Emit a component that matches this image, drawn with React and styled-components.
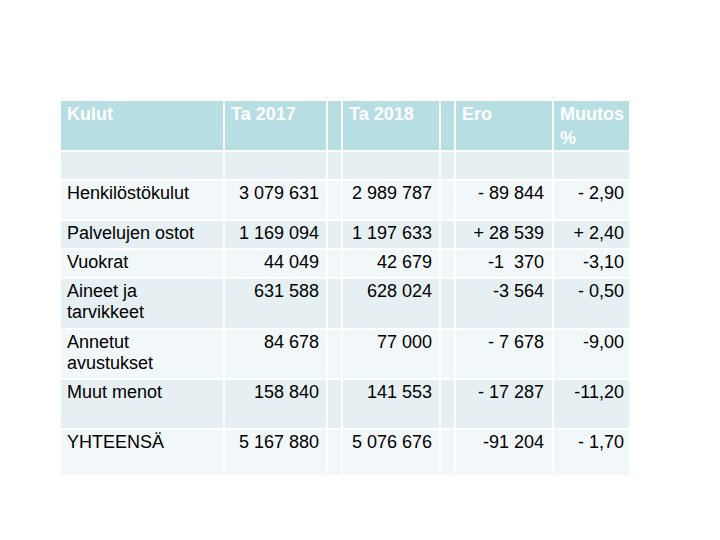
import styled, { createGlobalStyle } from 'styled-components';

const GlobalStyle = createGlobalStyle`
  * {
    box-sizing: border-box;
  }
  body {
    margin: 0;
    background: #ffffff;
    font-family: 'Liberation Sans', Arial, sans-serif;
  }
`;

const Page = styled.div`
  width: 720px;
  height: 540px;
  padding: 99px 0 0 59px;
`;

const Table = styled.table`
  table-layout: fixed;
  border-collapse: separate;
  border-spacing: 2px;
  width: 572px;
`;

const HeadCell = styled.th`
  height: 47px;
  padding: 1px 6px 0 6px;
  background: #b7dee3;
  color: #ffffff;
  font-size: 18px;
  font-weight: 700;
  line-height: 24px;
  text-align: left;
  vertical-align: top;
`;

const Cell = styled.td`
  height: ${(p) => p.$h}px;
  padding: 2px ${(p) => p.$pr || 7}px 0 6px;
  background: ${(p) => (p.$dark ? '#e6f0f3' : '#f2f7f9')};
  color: #000000;
  font-size: 18px;
  line-height: 21px;
  text-align: ${(p) => (p.$num ? 'right' : 'left')};
  vertical-align: top;
  white-space: ${(p) => (p.$num ? 'pre' : 'normal')};
`;

const widths = [162, 101, 13, 96, 13, 96, 75];

const rows = [
  { label: ['Henkilöstökulut'], v: ['3 079 631', '2 989 787', '- 89 844', '- 2,90'], h: 38 },
  { label: ['Palvelujen ostot'], v: ['1 169 094', '1 197 633', '+ 28 539', '+ 2,40'], h: 27 },
  { label: ['Vuokrat'], v: ['44 049', '42 679', '-1  370', '-3,10'], h: 27 },
  { label: ['Aineet ja', 'tarvikkeet'], v: ['631 588', '628 024', '-3 564', '- 0,50'], h: 49 },
  { label: ['Annetut', 'avustukset'], v: ['84 678', '77 000', '- 7 678', '-9,00'], h: 48 },
  { label: ['Muut menot'], v: ['158 840', '141 553', '- 17 287', '-11,20'], h: 48 },
  { label: ['YHTEENSÄ'], v: ['5 167 880', '5 076 676', '-91 204', '- 1,70'], h: 45 },
];

export default function App() {
  return (
    <Page>
      <GlobalStyle />
      <Table>
        <colgroup>
          {widths.map((w, i) => (
            <col key={i} style={{ width: w }} />
          ))}
        </colgroup>
        <thead>
          <tr>
            <HeadCell>Kulut</HeadCell>
            <HeadCell>Ta 2017</HeadCell>
            <HeadCell />
            <HeadCell>Ta 2018</HeadCell>
            <HeadCell />
            <HeadCell>Ero</HeadCell>
            <HeadCell>
              Muutos
              <br />%
            </HeadCell>
          </tr>
        </thead>
        <tbody>
          <tr>
            {widths.map((w, i) => (
              <Cell key={i} $h={27} $dark />
            ))}
          </tr>
          {rows.map((r, i) => {
            const dark = i % 2 === 1;
            return (
              <tr key={r.label[0]}>
                <Cell $h={r.h} $dark={dark}>
                  {r.label.map((l, j) => (
                    <span key={j}>
                      {j > 0 && <br />}
                      {l}
                    </span>
                  ))}
                </Cell>
                <Cell $h={r.h} $dark={dark} $num>{r.v[0]}</Cell>
                <Cell $h={r.h} $dark={dark} />
                <Cell $h={r.h} $dark={dark} $num>{r.v[1]}</Cell>
                <Cell $h={r.h} $dark={dark} />
                <Cell $h={r.h} $dark={dark} $num $pr={8}>{r.v[2]}</Cell>
                <Cell $h={r.h} $dark={dark} $num $pr={5}>{r.v[3]}</Cell>
              </tr>
            );
          })}
        </tbody>
      </Table>
    </Page>
  );
}
